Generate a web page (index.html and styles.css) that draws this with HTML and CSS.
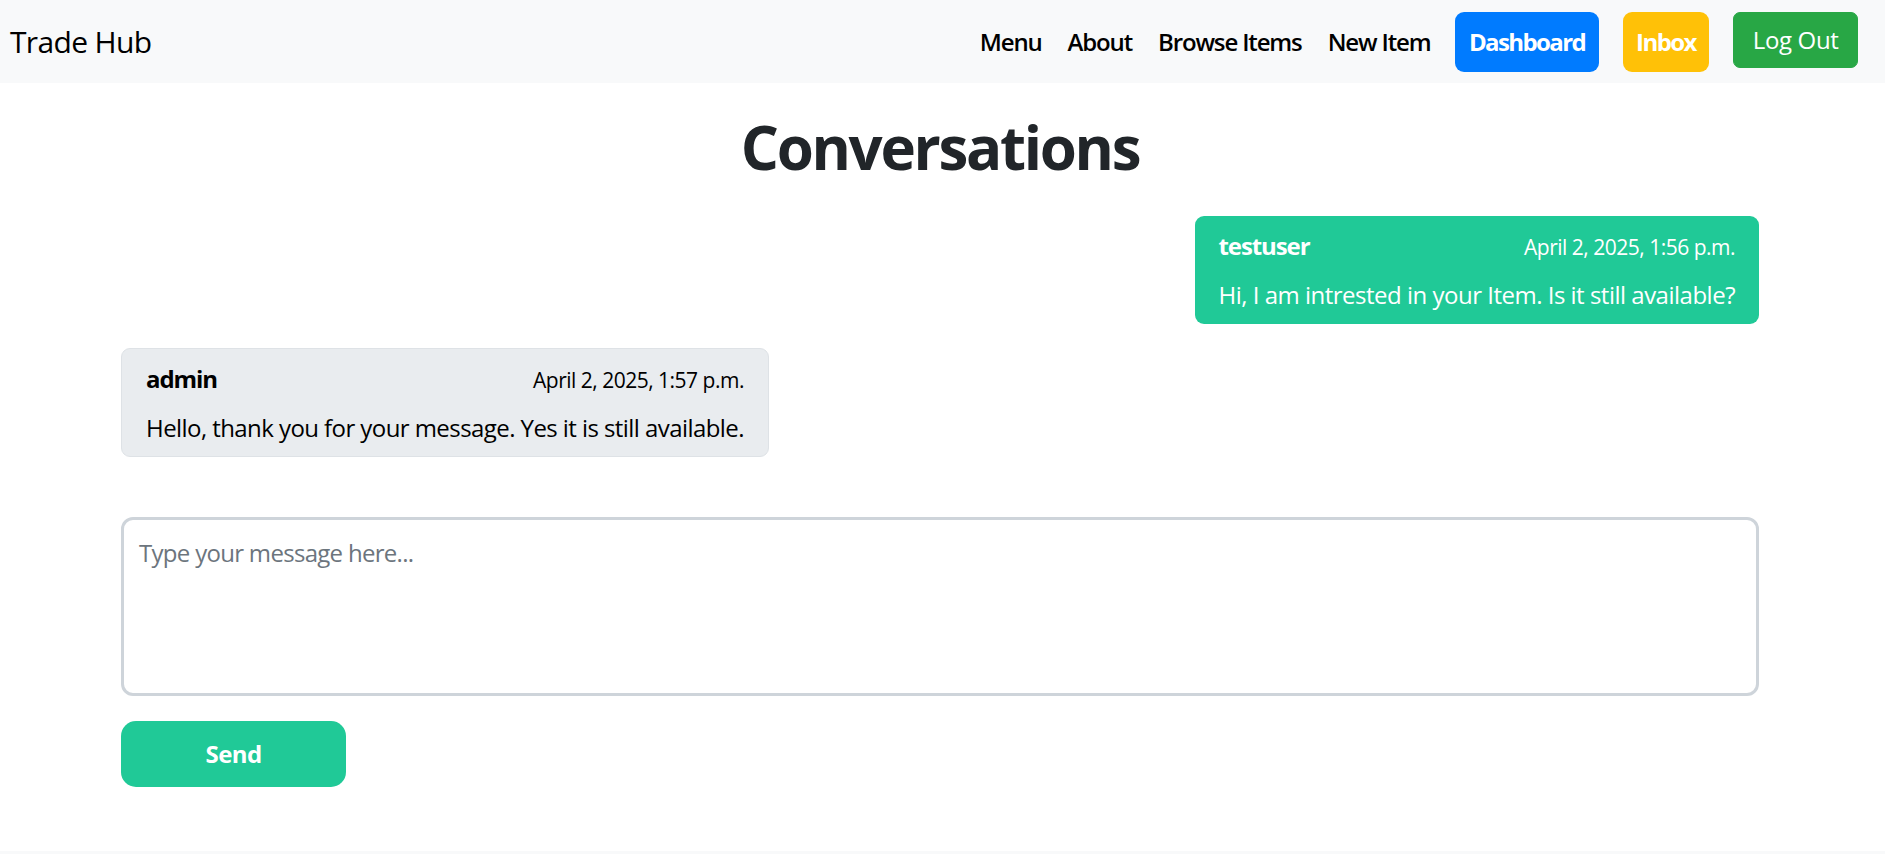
FILE: index.html
```html
<!DOCTYPE html>
<html lang="en">
<head>
<meta charset="utf-8">
<title>Trade Hub - Conversations</title>
<link rel="stylesheet" href="styles.css">
</head>
<body>
<nav class="navbar">
  <a class="brand" href="#">Trade Hub</a>
  <div class="nav-right">
    <ul class="nav-links">
      <li><a href="#">Menu</a></li>
      <li><a href="#">About</a></li>
      <li><a href="#">Browse Items</a></li>
      <li><a href="#">New Item</a></li>
    </ul>
    <div class="nav-buttons">
      <a class="nbtn nbtn-blue" href="#">Dashboard</a>
      <a class="nbtn nbtn-yellow" href="#">Inbox</a>
      <button class="btn-logout" type="button">Log Out</button>
    </div>
  </div>
</nav>

<main class="container">
  <h1 class="title">Conversations</h1>

  <div class="thread">
    <div class="bubble bubble-sent">
      <div class="bubble-head">
        <strong class="sender">testuser</strong>
        <small class="time">April 2, 2025, 1:56 p.m.</small>
      </div>
      <p class="bubble-text">Hi, I am intrested in your Item. Is it still available?</p>
    </div>

    <div class="bubble bubble-received">
      <div class="bubble-head">
        <strong class="sender">admin</strong>
        <small class="time">April 2, 2025, 1:57 p.m.</small>
      </div>
      <p class="bubble-text">Hello, thank you for your message. Yes it is still available.</p>
    </div>
  </div>

  <form class="reply-form">
    <textarea class="reply-input" placeholder="Type your message here..."></textarea>
    <button class="send-btn" type="button">Send</button>
  </form>
</main>

<footer class="footer"></footer>
</body>
</html>
```

FILE: styles.css
```css
* {
  box-sizing: border-box;
}

html, body {
  margin: 0;
  padding: 0;
}

body {
  font-family: "Open Sans", "Noto Sans", "Liberation Sans", sans-serif;
  font-size: 24px;
  line-height: 36px;
  letter-spacing: -0.5px;
  color: #212529;
  background: #ffffff;
  overflow: hidden;
}

a {
  text-decoration: none;
}

/* ---------- Navbar ---------- */
.navbar {
  height: 83px;
  background: #f8f9fa;
  display: flex;
  align-items: center;
  justify-content: space-between;
  padding: 0 27px 0 10px;
}

.brand {
  font-size: 30px;
  line-height: 45px;
  letter-spacing: -0.65px;
  color: #000;
  font-weight: 400;
}

.nav-right {
  display: flex;
  align-items: center;
  gap: 25px;
}

.nav-links {
  list-style: none;
  margin: 0;
  padding: 0;
  display: flex;
  gap: 26px;
}

.nav-links a {
  color: #000;
  font-weight: 600;
  font-size: 24px;
  line-height: 36px;
  letter-spacing: -1.15px;
}

.nav-buttons {
  display: flex;
  align-items: center;
  gap: 24px;
}

.nbtn {
  display: block;
  padding: 12px 13.5px;
  border-radius: 9px;
  color: #fff;
  font-weight: 700;
  font-size: 24px;
  line-height: 36px;
  letter-spacing: -1.6px;
}

.nbtn-blue {
  background: #007bff;
}

.nbtn-yellow {
  background: #ffc107;
}

.btn-logout {
  font-family: inherit;
  font-size: 24px;
  line-height: 36px;
  font-weight: 400;
  letter-spacing: -0.35px;
  color: #fff;
  background: #28a745;
  border: 1px solid #28a745;
  border-radius: 7px;
  padding: 9px 18.5px;
  margin-bottom: 4px;
  cursor: pointer;
}

/* ---------- Main ---------- */
.container {
  margin: 0 126px 0 121px;
}

.title {
  margin: 28px 0 0;
  font-size: 60px;
  line-height: 72px;
  font-weight: 700;
  letter-spacing: -2.3px;
  text-align: center;
  color: #212529;
}

.thread {
  margin-top: 33px;
  display: flex;
  flex-direction: column;
  gap: 24px;
}

.bubble {
  width: fit-content;
  max-width: 70%;
  padding: 12px 24px 11px;
  border-radius: 9px;
}

.bubble-sent {
  align-self: flex-end;
  background: #20c997;
  color: #fff;
}

.bubble-received {
  align-self: flex-start;
  background: #e9ecef;
  border: 1px solid #dee2e6;
  padding-bottom: 10px;
  color: #000;
}

.bubble-received .bubble-text {
  letter-spacing: -0.57px;
}

.bubble-head {
  display: flex;
  justify-content: space-between;
  align-items: baseline;
  gap: 24px;
  margin-bottom: 12px;
}

.sender {
  font-weight: 700;
  font-size: 24px;
  letter-spacing: -1.1px;
}

.time {
  font-size: 21px;
  letter-spacing: -0.5px;
}

.bubble-text {
  margin: 0;
}

/* ---------- Reply form ---------- */
.reply-form {
  margin-top: 60px;
  display: flex;
  flex-direction: column;
  align-items: flex-start;
  gap: 25px;
}

.reply-input {
  display: block;
  width: 100%;
  height: 179px;
  resize: none;
  border: 3px solid #ced4da;
  border-radius: 12px;
  padding: 15px;
  font-family: inherit;
  font-size: 24px;
  line-height: 36px;
  letter-spacing: -0.7px;
  color: #212529;
  background: #fff;
  outline: none;
}

.reply-input::placeholder {
  color: #6c757d;
}

.send-btn {
  width: 225px;
  height: 66px;
  border: none;
  border-radius: 15px;
  background: #20c997;
  color: #fff;
  font-family: inherit;
  font-size: 24px;
  line-height: 36px;
  font-weight: 700;
  letter-spacing: -0.6px;
  cursor: pointer;
}

/* ---------- Footer ---------- */
.footer {
  margin-top: 64px;
  height: 3px;
  background: #f8f9fa;
}
```
